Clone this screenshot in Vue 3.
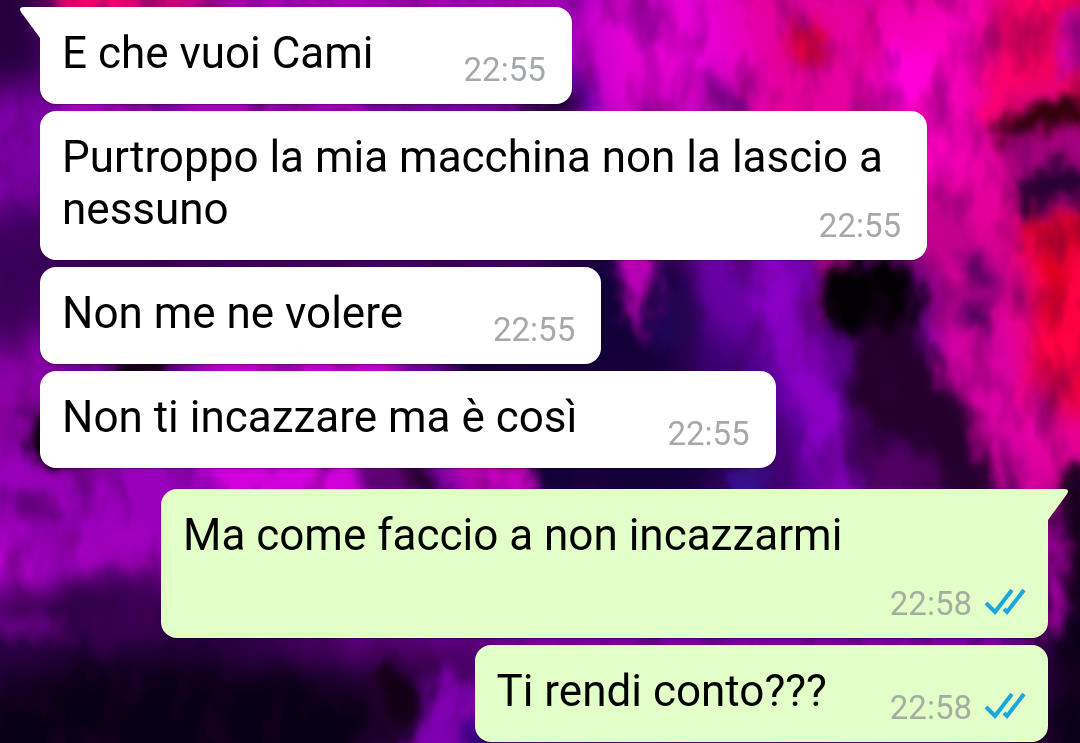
<script setup>
const messages = [
  { text: 'E che vuoi Cami', time: '22:55', own: false, first: true },
  { text: 'Purtroppo la mia macchina non la lascio a nessuno', time: '22:55', own: false, first: false },
  { text: 'Non me ne volere', time: '22:55', own: false, first: false },
  { text: 'Non ti incazzare ma è così', time: '22:55', own: false, first: false },
  { text: 'Ma come faccio a non incazzarmi', time: '22:58', own: true, first: true },
  { text: 'Ti rendi conto???', time: '22:58', own: true, first: false }
]
</script>

<template>
  <main class="chat">
    <svg class="wallpaper" viewBox="0 0 1080 743" preserveAspectRatio="xMidYMid slice" aria-hidden="true">
      <defs>
        <filter id="soft" x="-20%" y="-20%" width="140%" height="140%" color-interpolation-filters="sRGB">
          <feGaussianBlur stdDeviation="18" result="b" />
          <feTurbulence type="fractalNoise" baseFrequency="0.016 0.01" numOctaves="3" seed="4" result="n" />
          <feDisplacementMap in="b" in2="n" scale="40" xChannelSelector="R" yChannelSelector="G" />
          <feGaussianBlur stdDeviation="4" />
        </filter>
        <filter id="paint" x="-20%" y="-20%" width="140%" height="140%" color-interpolation-filters="sRGB">
          <feGaussianBlur stdDeviation="7" result="b" />
          <feTurbulence type="fractalNoise" baseFrequency="0.05 0.03" numOctaves="3" seed="9" result="n" />
          <feDisplacementMap in="b" in2="n" scale="32" xChannelSelector="R" yChannelSelector="G" />
          <feGaussianBlur stdDeviation="2" />
        </filter>
        <filter id="streaks" x="0" y="0" width="100%" height="100%" color-interpolation-filters="sRGB">
          <feTurbulence type="fractalNoise" baseFrequency="0.03 0.014" numOctaves="3" seed="21" />
          <feColorMatrix values="0 0 0 0 0.2  0 0 0 0 0  0 0 0 0 0.25  2.4 0 0 0 -1.1" />
        </filter>
      </defs>
      <rect width="1080" height="743" fill="#7800a0" />
      <g filter="url(#soft)">
        <path d="M-40-40H45L55 60 30 90-40 80Z" fill="#22003a" />
        <path d="M60-40H220V15H60Z" fill="#e00070" />
        <path d="M220-40H560V20H220Z" fill="#b000b8" />
        <path d="M-40 90H120V210H-40Z" fill="#7d00a6" />
        <path d="M-40 220H160L620 235V295H130V335H-40Z" fill="#3b005c" />
        <path d="M-40 350H60V480H-40Z" fill="#8b00a4" />
        <path d="M200 345H400V395H200Z" fill="#c800d0" />
        <path d="M560 0H700V120H560Z" fill="#b400c8" />
        <path d="M600-40H800V130H610Z" fill="#e800d4" />
        <path d="M730-40H1130V560H1000L930 260 760 200Z" fill="#e4009c" />
        <path d="M850 10H1000L960 190H880Z" fill="#f800bc" />
        <path d="M1000-40H1130V100H1000Z" fill="#f20055" />
        <path d="M1020 210H1130V420H1040Z" fill="#ef0040" />
        <path d="M430 320H560L540 240H660L740 350 830 520H520Z" fill="#120038" />
        <path d="M680 220H840L850 510H800L735 420Z" fill="#6a00a8" />
        <path d="M680 300 750 350 800 510H720Z" fill="#3a0070" />
        <path d="M840 330 910 340 960 520H850Z" fill="#3a0050" />
        <path d="M-20 450H230V620H-40Z" fill="#9a00bb" />
        <path d="M-40 535H35L30 590H-40Z" fill="#c000da" />
        <path d="M-40 605 60 580 210 578 480 660 430 790H-40Z" fill="#2c0044" />
        <path d="M-40 690 100 660 300 665 400 700 330 800H-40Z" fill="#080014" />
        <path d="M250 625H500V665H300Z" fill="#4c0066" />
        <path d="M1050 500H1120V780H1020Z" fill="#0a0018" />
      </g>
      <g filter="url(#paint)">
        <path d="M612 240 660 240 654 275 646 325 638 345 628 310Z" fill="#bc00b8" />
        <path d="M655 275 690 290 700 340 650 355Z" fill="#20085c" opacity="0.7" />
        <path d="M740 240H790L805 310 830 370 845 440 858 510H830L805 420 765 330Z" fill="#8a00c4" />
        <path d="M815 245 850 240 848 270 830 290 835 325 818 322Z" fill="#b0008c" />
        <path d="M822 274 850 260 885 254 918 273 924 300 918 327 900 347 845 337 824 320Z" fill="#020003" />
        <path d="M860 322 912 325 946 382 974 420 999 515 960 515 915 440 865 430 850 395Z" fill="#24002c" />
        <path d="M870 455 935 455 945 515 870 515Z" fill="#560068" />
        <path d="M950 300 995 270 1010 380 1048 500 1010 500 965 405 935 360Z" fill="#d600a3" opacity="0.8" />
        <path d="M960 280 990 250 1006 285 990 325 958 335Z" fill="#a00084" />
        <path d="M960 252 986 256 982 282 964 280ZM968 303 992 305 986 328 968 324Z" fill="#410055" />
        <path d="M940 285 958 276 950 320 928 335Z" fill="#850070" />
        <path d="M1032 225 1090 225V382L1041 370Z" fill="#ff0044" />
        <path d="M1043 235 1068 250 1064 320 1046 340Z" fill="#dc0020" />
        <path d="M1010 135 1090 122V201L1025 211Z" fill="#a4007d" />
        <path d="M996 130Q1025 90 1095 98V124Q1044 120 1000 144Z" fill="#2c0008" />
        <path d="M1036 170 1060 160 1076 174 1095 170V210L1060 194 1028 218 1010 208 1026 188Z" fill="#260030" />
        <path d="M1015 222 1045 214 1095 208V255H1042Z" fill="#da0028" />
        <path d="M1025-10 1060-10 1030 60 1000 125 976 125Z" fill="#ff0065" opacity="0.8" />
        <path d="M1060 20 1095 5V70L1052 77Z" fill="#d600a0" />
        <path d="M790 24 826 20 830 66 790 64Z" fill="#e80040" />
        <path d="M855 5 885 0 869 65 850 85Z" fill="#d90090" />
        <path d="M618-10 655-10 670 32 637 50Z" fill="#a000a4" />
        <path d="M698 72 720 74 754 118H720Z" fill="#80008c" />
        <path d="M560 70 590 75 605 115H545Z" fill="#6400a2" />
        <path d="M895 45 930 50 916 108 885 105Z" fill="#ff00da" />
        <path d="M925 190 970 190 978 265 925 270Z" fill="#c1008e" />
        <path d="M1028 385 1050 400 1044 445 1030 440Z" fill="#ec00a8" />
        <path d="M1003 430 1018 470 1018 505 998 505Z" fill="#8f007c" />
        <path d="M1060 470 1095 455V650L1065 565Z" fill="#16001d" />
        <path d="M1045 520 1060 505 1068 590 1058 640H1042Z" fill="#a0009d" />
        <path d="M24 422 38 408 70 406V474L32 456Z" fill="#050009" />
        <path d="M114 354H168V382H116Z" fill="#0c0010" />
        <path d="M5 495 34 486 65 520 5 524Z" fill="#64007c" />
        <path d="M193 462H350L362 500H230Z" fill="#d300dc" />
        <path d="M353 460 415 462 430 500H375Z" fill="#65007c" />
        <path d="M400 460 420 464 446 500H418Z" fill="#1b0021" />
        <path d="M445 464 530 460 540 500 470 500Z" fill="#c500bd" />
        <path d="M734 464H770L760 500H740Z" fill="#3a14a0" />
        <path d="M70 540 145 524 162 568 76 567Z" fill="#aa00c0" opacity="0.6" />
        <path d="M-20 605 50 612 70 640-20 636Z" fill="#60007c" />
        <path d="M65 605 160 598 170 640 95 647Z" fill="#3f0056" opacity="0.7" />
        <path d="M368 668 408 668 422 705 390 740 370 700Z" fill="#120014" />
        <path d="M440 670 500 690 480 765 400 765Z" fill="#7e00ae" />
        <path d="M462 725H490V765H458Z" fill="#34007c" />
        <path d="M55-10H135L130 12H60Z" fill="#f20068" />
        <path d="M65 98H145V116H70ZM180 98H360V116H180Z" fill="#b200c4" />
        <path d="M526 98H574V118H526Z" fill="#16002c" />
      </g>
      <rect width="1080" height="743" filter="url(#streaks)" opacity="0.45" />
    </svg>

    <article
      v-for="(message, i) in messages"
      :key="i"
      class="bubble"
      :class="{ own: message.own, first: message.first, reply: message.own && message.first }"
    >
      <svg v-if="message.first" class="tail" viewBox="0 0 22 31" aria-hidden="true">
        <path d="M22 0H4Q-2 0 1 5L20 31H22Z" />
      </svg>
      <span class="text">{{ message.text }}</span>
      <span class="meta">
        <time>{{ message.time }}</time>
        <svg v-if="message.own" class="ticks" viewBox="0 0 42 30" role="img" aria-label="Letto">
          <path d="M2 17L11 26L28 4M20 23L23 26L40 4" />
        </svg>
      </span>
    </article>
  </main>
</template>

<style>
html,
body {
  margin: 0;
  background: #7800a0;
}
</style>

<style scoped>
.chat {
  position: relative;
  display: flex;
  flex-direction: column;
  align-items: flex-start;
  gap: 7px;
  box-sizing: border-box;
  min-height: 100vh;
  padding: 7px 32px 1px 40px;
  overflow: hidden;
  font-family: Roboto, "Liberation Sans", sans-serif;
}

.wallpaper {
  position: absolute;
  inset: 0;
  width: 100%;
  height: 100%;
}

.bubble {
  --fill: #ffffff;
  position: relative;
  display: flow-root;
  box-sizing: border-box;
  max-width: 88%;
  padding: 20px 26px 15px 22px;
  border-radius: 16px;
  background: var(--fill);
  box-shadow: 0 1px 1px rgba(0, 0, 0, 0.3);
  color: #000000;
  font-size: 44px;
  line-height: 52px;
}

.bubble.own {
  --fill: #e1ffc7;
  align-self: flex-end;
  padding-right: 22px;
}

.bubble.first {
  border-top-left-radius: 0;
}

.bubble.reply {
  margin-top: 14px;
  border-top-left-radius: 16px;
  border-top-right-radius: 0;
}

.tail {
  position: absolute;
  top: 0;
  left: -20px;
  width: 22px;
  height: 31px;
  fill: var(--fill);
}

.own .tail {
  right: -20px;
  left: auto;
  transform: scaleX(-1);
}

.meta {
  float: right;
  display: flex;
  align-items: center;
  gap: 12px;
  margin-top: 24px;
  margin-left: 90px;
  color: #a5a9ab;
  font-size: 33px;
  line-height: 38px;
}

.own .meta {
  margin-left: 63px;
  color: #a3ada0;
}

.ticks {
  width: 42px;
  height: 30px;
  margin-bottom: 6px;
  fill: none;
  stroke: #1ba6df;
  stroke-width: 4;
}
</style>
